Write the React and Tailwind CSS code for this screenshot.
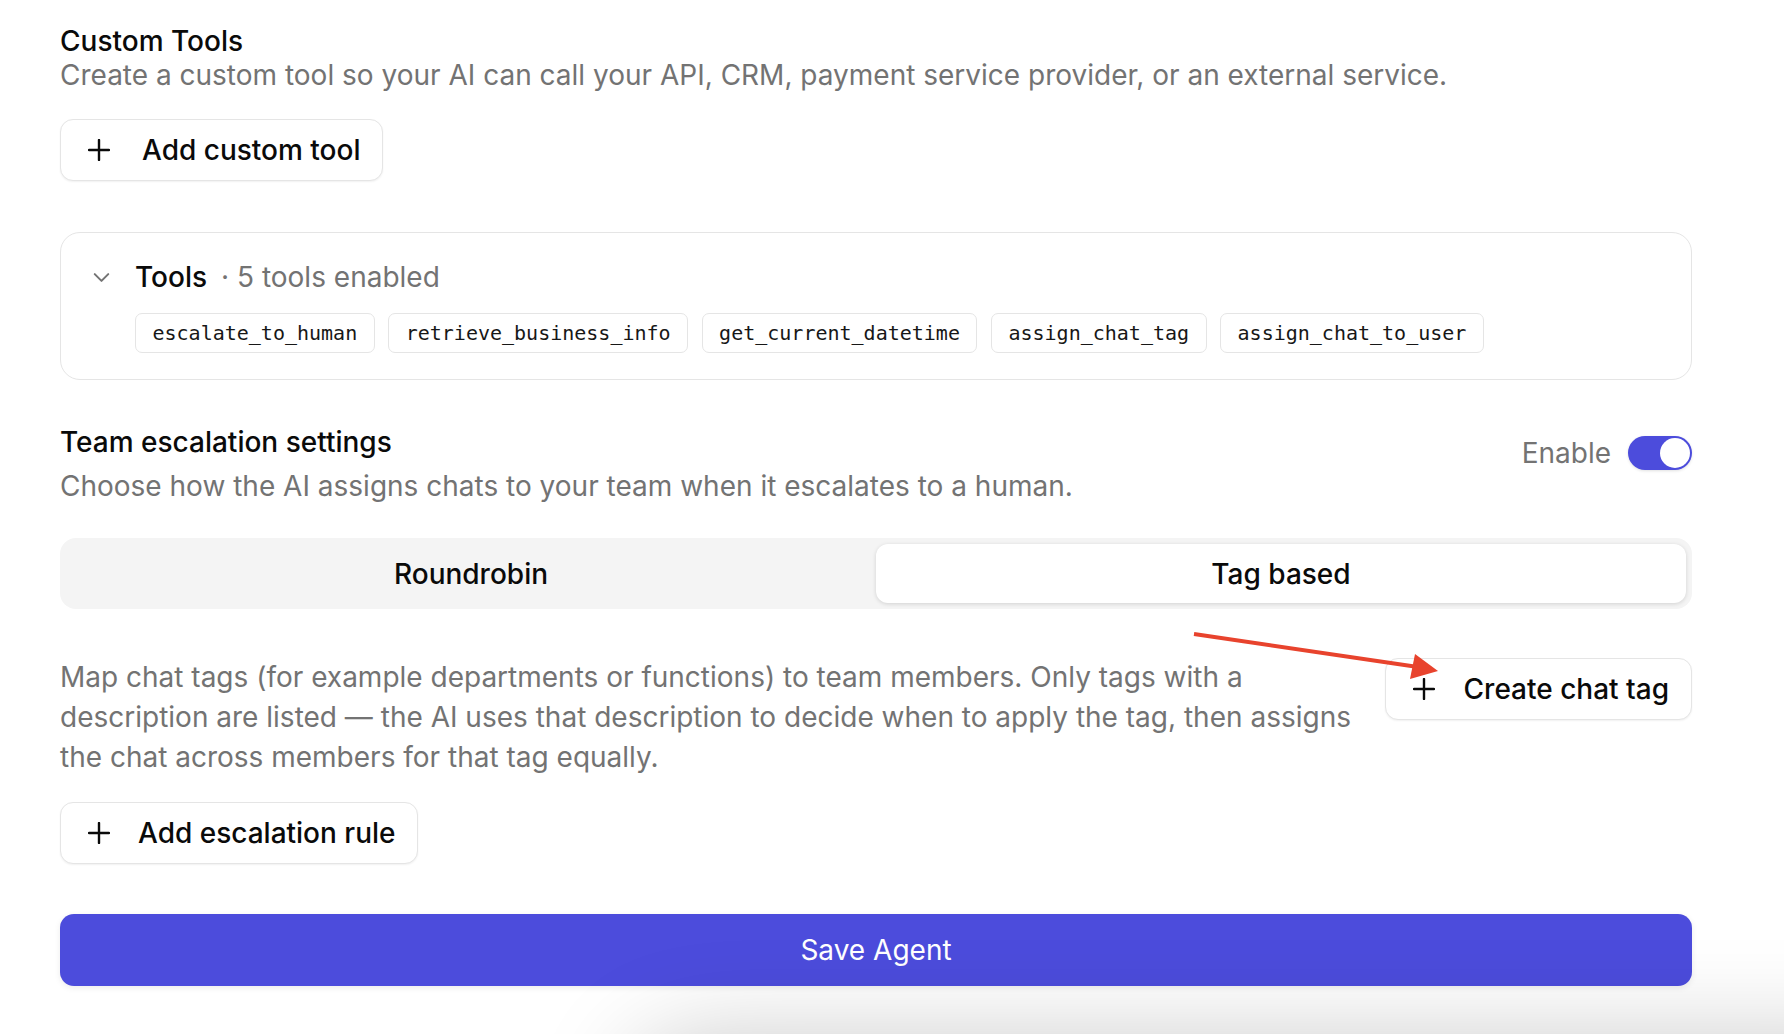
import React, { useState } from 'react';

const tools = [
  'escalate_to_human',
  'retrieve_business_info',
  'get_current_datetime',
  'assign_chat_tag',
  'assign_chat_to_user',
];

function PlusIcon() {
  return (
    <svg width="22" height="22" viewBox="0 0 22 22" fill="none" stroke="currentColor" strokeWidth="2.4" strokeLinecap="round">
      <path d="M11 1v20M1 11h20" />
    </svg>
  );
}

function ChevronDown() {
  return (
    <svg width="27" height="27" viewBox="0 0 24 24" fill="none" stroke="currentColor" strokeWidth="1.8" strokeLinecap="round" strokeLinejoin="round">
      <path d="m6 9 6 6 6-6" />
    </svg>
  );
}

function OutlineButton({ children, className = '' }) {
  return (
    <button
      className={`flex h-[62px] items-center rounded-[13px] border border-[#e5e5e5] bg-white text-[28px] font-medium text-[#0a0a0a] shadow-[0_1px_2px_rgba(0,0,0,0.06)] ${className}`}
    >
      {children}
    </button>
  );
}

function Toggle({ on }) {
  return (
    <div className={`flex h-[34px] w-[64px] items-center rounded-full p-[2px] shadow-[0_1px_3px_rgba(0,0,0,0.12)] ${on ? 'justify-end bg-[#4c4cdc]' : 'justify-start bg-[#e5e5e5]'}`}>
      <div className="h-[30px] w-[30px] rounded-full bg-white" />
    </div>
  );
}

export default function App() {
  const [mode, setMode] = useState('tag');

  return (
    <div className="relative h-[1034px] overflow-hidden bg-white font-['Inter',sans-serif] text-[#0a0a0a]">
      <div className="ml-[60px] w-[1632px] pt-[24px]">
        {/* custom tools */}
        <h2 className="text-[28px] font-medium leading-[34px]">Custom Tools</h2>
        <p className="text-[28px] leading-[34px] text-[#737373]">
          Create a custom tool so your AI can call your API, CRM, payment service provider, or an external service.
        </p>
        <OutlineButton className="mt-[27px] gap-[32px] pl-[27px] pr-[22px]">
          <PlusIcon />
          Add custom tool
        </OutlineButton>

        {/* enabled tools */}
        <div className="mt-[51px] h-[148px] rounded-[20px] border border-[#e5e5e5] pl-[27px] pt-[27px]">
          <div className="flex h-[34px] items-center">
            <span className="text-[#737373]">
              <ChevronDown />
            </span>
            <span className="ml-[20px] text-[28px] font-medium leading-[34px]">Tools</span>
            <span className="ml-[14px] text-[28px] leading-[34px] text-[#737373]">· 5 tools enabled</span>
          </div>
          <div className="mt-[19px] flex gap-[13.5px] pl-[47px]">
            {tools.map((t) => (
              <span
                key={t}
                className="flex h-[40px] items-center rounded-[7px] border border-[#e5e5e5] bg-white px-[16.5px] font-['DejaVu_Sans_Mono',monospace] text-[20px] text-[#171717]"
              >
                {t}
              </span>
            ))}
          </div>
        </div>

        {/* team escalation */}
        <div className="mt-[45px] flex items-start justify-between">
          <div>
            <h2 className="text-[28px] font-medium leading-[34px]">Team escalation settings</h2>
            <p className="mt-[10px] text-[28px] leading-[34px] text-[#737373]">
              Choose how the AI assigns chats to your team when it escalates to a human.
            </p>
          </div>
          <div className="mt-[11px] flex items-center gap-[17px]">
            <span className="text-[28px] leading-[34px] text-[#737373]">Enable</span>
            <Toggle on />
          </div>
        </div>

        <div className="mt-[35px] grid h-[71px] grid-cols-2 rounded-[16px] bg-[#f4f4f4] p-[6px]">
          <button
            onClick={() => setMode('round')}
            className={`rounded-[12px] text-[28px] font-medium ${mode === 'round' ? 'bg-white shadow-[0_1px_4px_rgba(0,0,0,0.14)]' : ''}`}
          >
            Roundrobin
          </button>
          <button
            onClick={() => setMode('tag')}
            className={`rounded-[12px] text-[28px] font-medium ${mode === 'tag' ? 'bg-white shadow-[0_1px_4px_rgba(0,0,0,0.14)]' : ''}`}
          >
            Tag based
          </button>
        </div>

        <div className="mt-[48px] flex items-start justify-between">
          <p className="w-[1310px] text-[28px] leading-[40px] text-[#737373]">
            Map chat tags (for example departments or functions) to team members. Only tags with a description are listed — the AI uses that description to decide when to apply the tag, then assigns the chat across members for that tag equally.
          </p>
          <OutlineButton className="mt-[1px] gap-[29px] pl-[27px] pr-[22px]">
            <PlusIcon />
            Create chat tag
          </OutlineButton>
        </div>

        <OutlineButton className="mt-[25px] gap-[28px] pl-[27px] pr-[21px]">
          <PlusIcon />
          Add escalation rule
        </OutlineButton>

        <button className="mt-[50px] h-[72px] w-full rounded-[14px] bg-[#4c4cdc] text-[28px] text-white shadow-[0_2px_6px_rgba(0,0,0,0.08)]">
          Save Agent
        </button>
      </div>

      {/* annotation arrow pointing at the create tag button */}
      <svg className="pointer-events-none absolute left-0 top-0" width="1784" height="1034">
        <line x1="1194" y1="634" x2="1418" y2="667" stroke="#e8432d" strokeWidth="4" />
        <polygon points="1438,671 1415,654 1410,679" fill="#e8432d" />
      </svg>

      {/* soft shadow of a panel sitting below the fold */}
      <div className="pointer-events-none absolute left-[660px] right-[-120px] top-[1070px] h-[200px] rounded-[40px] bg-white shadow-[0_0_100px_30px_rgba(0,0,0,0.22)]" />
    </div>
  );
}
